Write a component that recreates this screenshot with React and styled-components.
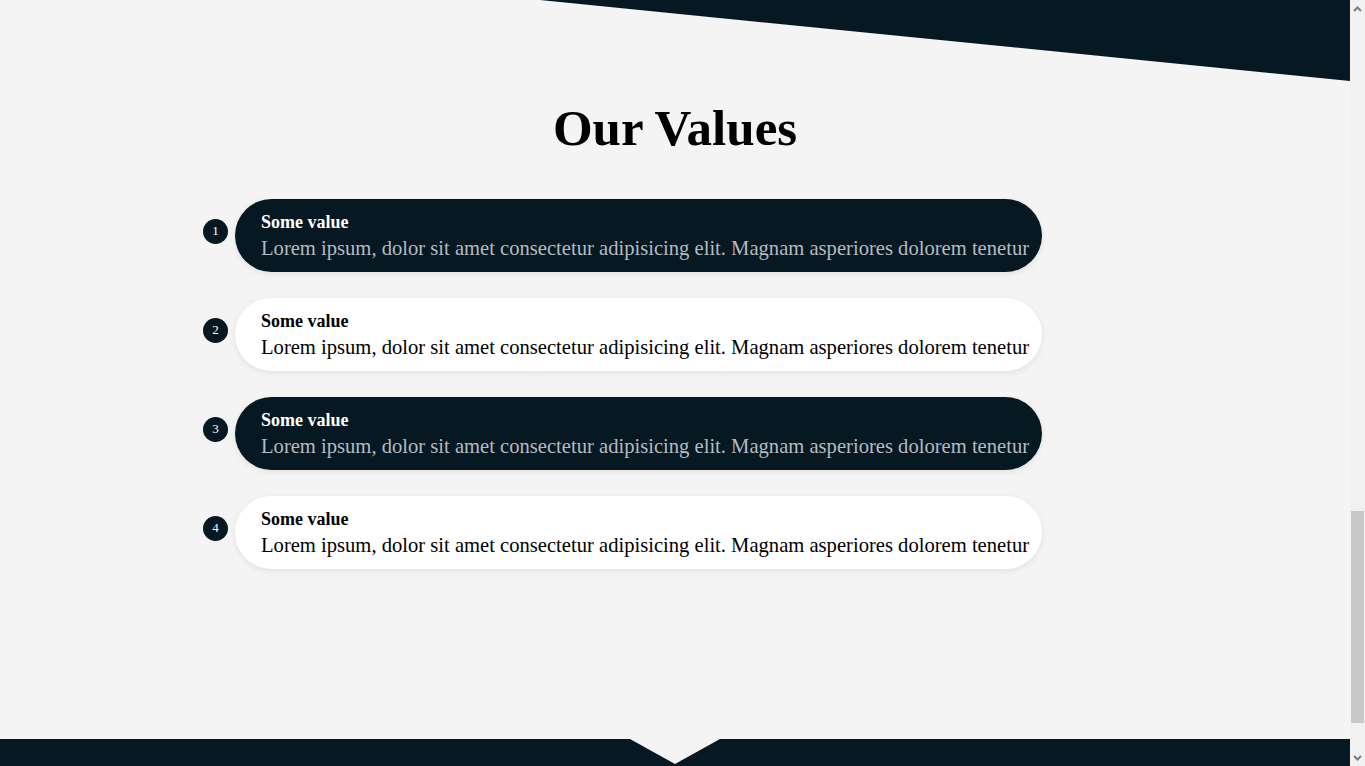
import React from 'react'
import styled, { createGlobalStyle } from 'styled-components'

const values = [
  { id: 1, dark: true },
  { id: 2, dark: false },
  { id: 3, dark: true },
  { id: 4, dark: false },
]

const text =
  'Lorem ipsum, dolor sit amet consectetur adipisicing elit. Magnam asperiores dolorem tenetur'

const Chevron = ({ down }) => (
  <svg width="9" height="6" viewBox="0 0 9 6">
    <polyline
      points={down ? '1,1 4.5,4.5 8,1' : '1,5 4.5,1.5 8,5'}
      fill="none"
      stroke="#7b7b7b"
      strokeWidth="2"
    />
  </svg>
)

export default function App() {
  return (
    <>
      <GlobalStyle />
      <Screen>
        <Page>
          <TopBand />
          <ValuesSection>
            <Heading>Our Values</Heading>
            <List>
              {values.map((v) => (
                <Row key={v.id}>
                  <Badge>{v.id}</Badge>
                  <Card $dark={v.dark}>
                    <Title>Some value</Title>
                    <Body $dark={v.dark}>{text}</Body>
                  </Card>
                </Row>
              ))}
            </List>
          </ValuesSection>
          <Footer />
        </Page>
        <ScrollRail>
          <ScrollButton>
            <Chevron />
          </ScrollButton>
          <ScrollTrack>
            <ScrollThumb />
          </ScrollTrack>
          <ScrollButton>
            <Chevron down />
          </ScrollButton>
        </ScrollRail>
      </Screen>
    </>
  )
}

const GlobalStyle = createGlobalStyle`
  html, body {
    margin: 0;
    padding: 0;
    overflow: hidden;
  }
  body {
    background: #f4f4f4;
    font-family: "Liberation Serif", "Times New Roman", serif;
    color: #000;
  }
`

const Screen = styled.div`
  display: flex;
  height: 100vh;
  overflow: hidden;
`

const Page = styled.main`
  flex: 1;
  display: flex;
  flex-direction: column;
  min-width: 0;
`

const TopBand = styled.div`
  height: 81px;
  flex-shrink: 0;
  background: #061822;
  clip-path: polygon(40% 0, 100% 0, 100% 100%);
`

const ValuesSection = styled.section`
  position: relative;
  flex: 1;
  padding-top: 18px;
  background: #f4f4f4;

  &::after {
    content: '';
    position: absolute;
    left: 50%;
    bottom: -25px;
    transform: translateX(-50%);
    border-left: 45px solid transparent;
    border-right: 45px solid transparent;
    border-top: 25px solid #f4f4f4;
    z-index: 1;
  }
`

const Heading = styled.h1`
  margin: 0 0 42px;
  text-align: center;
  font-size: 51px;
  font-weight: 700;
`

const List = styled.div`
  display: flex;
  flex-direction: column;
  gap: 26px;
  padding-left: 203px;
`

const Row = styled.div`
  display: flex;
  align-items: center;
  gap: 7px;
`

const Badge = styled.span`
  display: flex;
  align-items: center;
  justify-content: center;
  width: 25px;
  height: 25px;
  margin-bottom: 9px;
  border-radius: 50%;
  background: #061822;
  color: #fff;
  font-size: 13px;
`

const Card = styled.div`
  display: flex;
  flex-direction: column;
  justify-content: center;
  box-sizing: border-box;
  width: 807px;
  height: 73px;
  padding: 1px 12px 0 26px;
  border-radius: 37px;
  background: ${(p) => (p.$dark ? '#061822' : '#fff')};
  color: ${(p) => (p.$dark ? '#fff' : '#000')};
  box-shadow: 0 2px 6px rgba(0, 0, 0, 0.08);
  overflow: hidden;
`

const Title = styled.div`
  font-size: 18px;
  font-weight: 700;
  line-height: 22px;
`

const Body = styled.div`
  margin-top: 2px;
  font-size: 20.6px;
  line-height: 26px;
  white-space: nowrap;
  color: ${(p) => (p.$dark ? '#b4bcc1' : '#000')};
`

const Footer = styled.footer`
  height: 27px;
  flex-shrink: 0;
  background: #061822;
`

const ScrollRail = styled.div`
  width: 15px;
  flex-shrink: 0;
  display: flex;
  flex-direction: column;
  background: #f1f1f1;
`

const ScrollButton = styled.div`
  height: 17px;
  flex-shrink: 0;
  display: flex;
  align-items: center;
  justify-content: center;
`

const ScrollTrack = styled.div`
  flex: 1;
  padding-top: 494px;
`

const ScrollThumb = styled.div`
  height: 212px;
  margin: 0 1px;
  background: #c7c7c7;
`
